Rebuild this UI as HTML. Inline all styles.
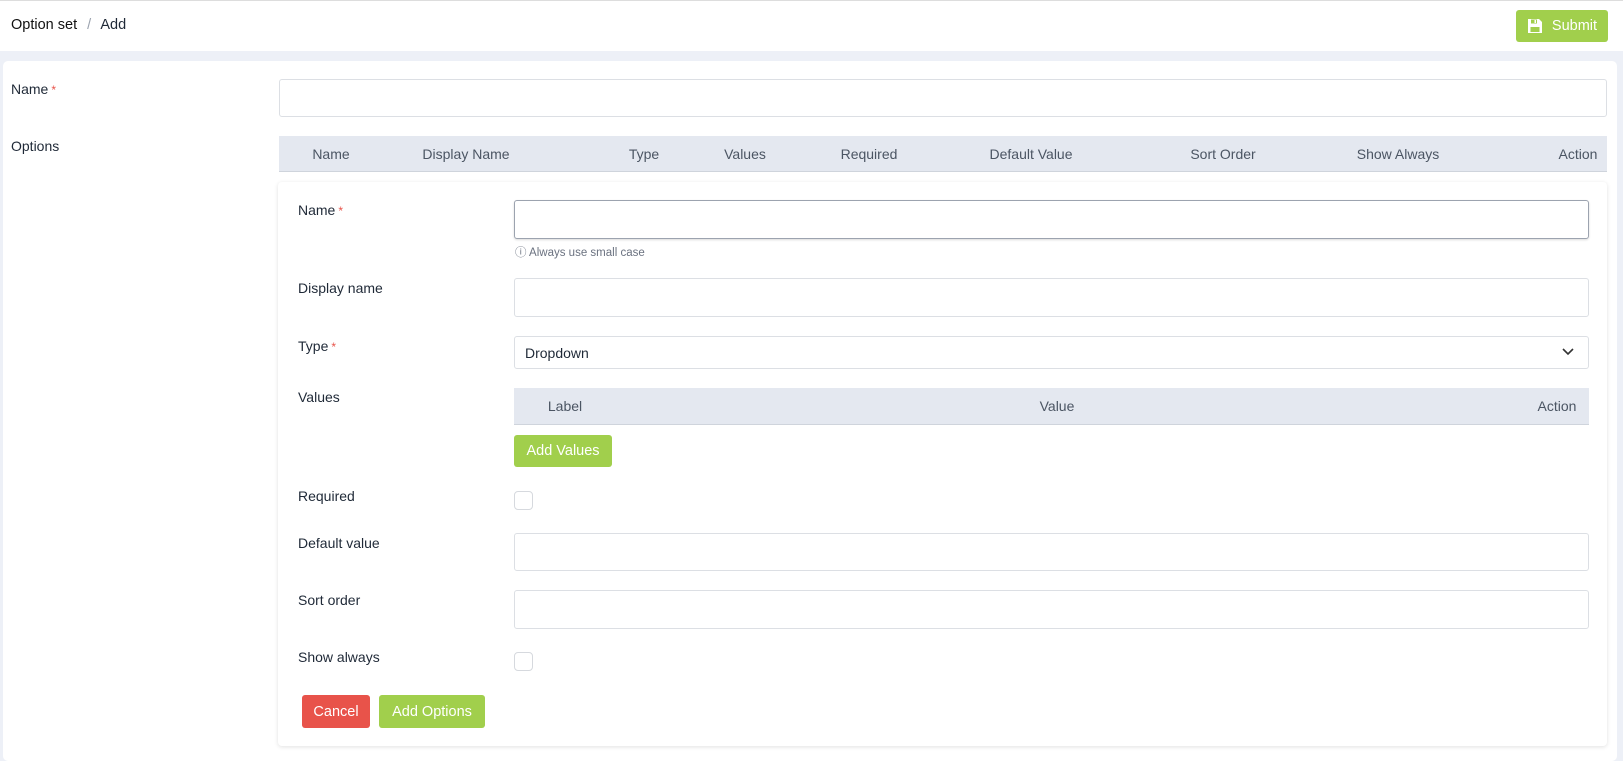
<!DOCTYPE html>
<html><head><meta charset="utf-8"><style>
*{box-sizing:border-box;margin:0;padding:0}
body{width:1623px;height:750px;overflow:hidden;background:#edf0f7;font-family:"Liberation Sans",sans-serif;font-size:14px;color:#1f2937;position:relative}
.a{position:absolute}
.hdr{left:0;top:0;width:1623px;height:51px;background:#fff;border-top:1px solid #ddd}
.btn{position:absolute;color:#fff;border-radius:3px;font-size:14.5px;display:flex;align-items:center;justify-content:center}
.g{background:#a1cf4c}
.r{background:#e8534a}
.inp{position:absolute;background:#fff;border:1px solid #dcdfe4;border-radius:3px}
.th{position:absolute;background:#e4e8f0;border-bottom:1px solid #cfd4dc;color:#4b5563}
.th span{position:absolute;top:50%;transform:translate(-50%,-50%);white-space:nowrap}
.lbl{position:absolute}
.st{color:#e8534a;font-size:12px;margin-left:3px}
.cb{position:absolute;width:19px;height:19px;border:1px solid #d6d9de;border-radius:4px;background:#fff}
</style></head><body>
<div class="a hdr">
 <div class="a" style="left:11px;top:16px;font-size:14.5px"><span style="font-weight:normal;color:#111">Option set</span> <span style="color:#9ca3af;margin:0 6px">/</span> Add</div>
 <div class="btn g" style="left:1516px;top:9px;width:92px;height:32px">
  <svg width="16" height="16" viewBox="0 0 16 16" style="margin-right:9px"><path d="M1 1h11l3 3v11H1z" fill="#fff"/><rect x="4" y="1.5" width="6" height="4" fill="#a1cf4c"/><rect x="7.5" y="2" width="1.5" height="3" fill="#fff"/><rect x="3.5" y="9" width="9" height="5" fill="#a1cf4c"/></svg>Submit</div>
</div>
<div class="a" style="left:3px;top:61px;width:1614px;height:700px;background:#fff;border-radius:5px"></div>
<div class="lbl" style="left:11px;top:81px">Name<span class="st">*</span></div>
<div class="inp" style="left:279px;top:79px;width:1328px;height:38px"></div>
<div class="lbl" style="left:11px;top:138px">Options</div>
<div class="th" style="left:279px;top:136px;width:1328px;height:36px">
 <span style="left:52px">Name</span><span style="left:187px">Display Name</span><span style="left:365px">Type</span><span style="left:466px">Values</span><span style="left:590px">Required</span><span style="left:752px">Default Value</span><span style="left:944px">Sort Order</span><span style="left:1119px">Show Always</span><span style="left:1299px">Action</span>
</div>
<div class="a" style="left:278px;top:182px;width:1329px;height:564px;background:#fff;border-radius:4px;box-shadow:0 1px 4px rgba(0,0,0,.12)"></div>
<div class="lbl" style="left:298px;top:202px">Name<span class="st">*</span></div>
<div class="inp" style="left:514px;top:200px;width:1075px;height:39px;border-color:#9ca3af;box-shadow:0 1px 2px rgba(0,0,0,.15)"></div>
<div class="lbl" style="left:515px;top:244px;font-size:11.5px;color:#6b7280">ⓘ Always use small case</div>
<div class="lbl" style="left:298px;top:280px">Display name</div>
<div class="inp" style="left:514px;top:278px;width:1075px;height:39px"></div>
<div class="lbl" style="left:298px;top:338px">Type<span class="st">*</span></div>
<div class="inp" style="left:514px;top:336px;width:1075px;height:33px"><span class="a" style="left:10px;top:8px">Dropdown</span>
<svg class="a" style="right:14px;top:11px" width="12" height="8" viewBox="0 0 12 8"><path d="M1 1l5 5 5-5" fill="none" stroke="#333" stroke-width="1.6"/></svg></div>
<div class="lbl" style="left:298px;top:389px">Values</div>
<div class="th" style="left:514px;top:388px;width:1075px;height:37px"><span style="left:51px">Label</span><span style="left:543px">Value</span><span style="left:1043px">Action</span></div>
<div class="btn g" style="left:514px;top:435px;width:98px;height:32px">Add Values</div>
<div class="lbl" style="left:298px;top:488px">Required</div>
<div class="cb" style="left:514px;top:491px"></div>
<div class="lbl" style="left:298px;top:535px">Default value</div>
<div class="inp" style="left:514px;top:533px;width:1075px;height:38px"></div>
<div class="lbl" style="left:298px;top:592px">Sort order</div>
<div class="inp" style="left:514px;top:590px;width:1075px;height:39px"></div>
<div class="lbl" style="left:298px;top:649px">Show always</div>
<div class="cb" style="left:514px;top:652px"></div>
<div class="btn r" style="left:302px;top:695px;width:68px;height:33px">Cancel</div>
<div class="btn g" style="left:379px;top:695px;width:106px;height:33px">Add Options</div>
</body></html>
